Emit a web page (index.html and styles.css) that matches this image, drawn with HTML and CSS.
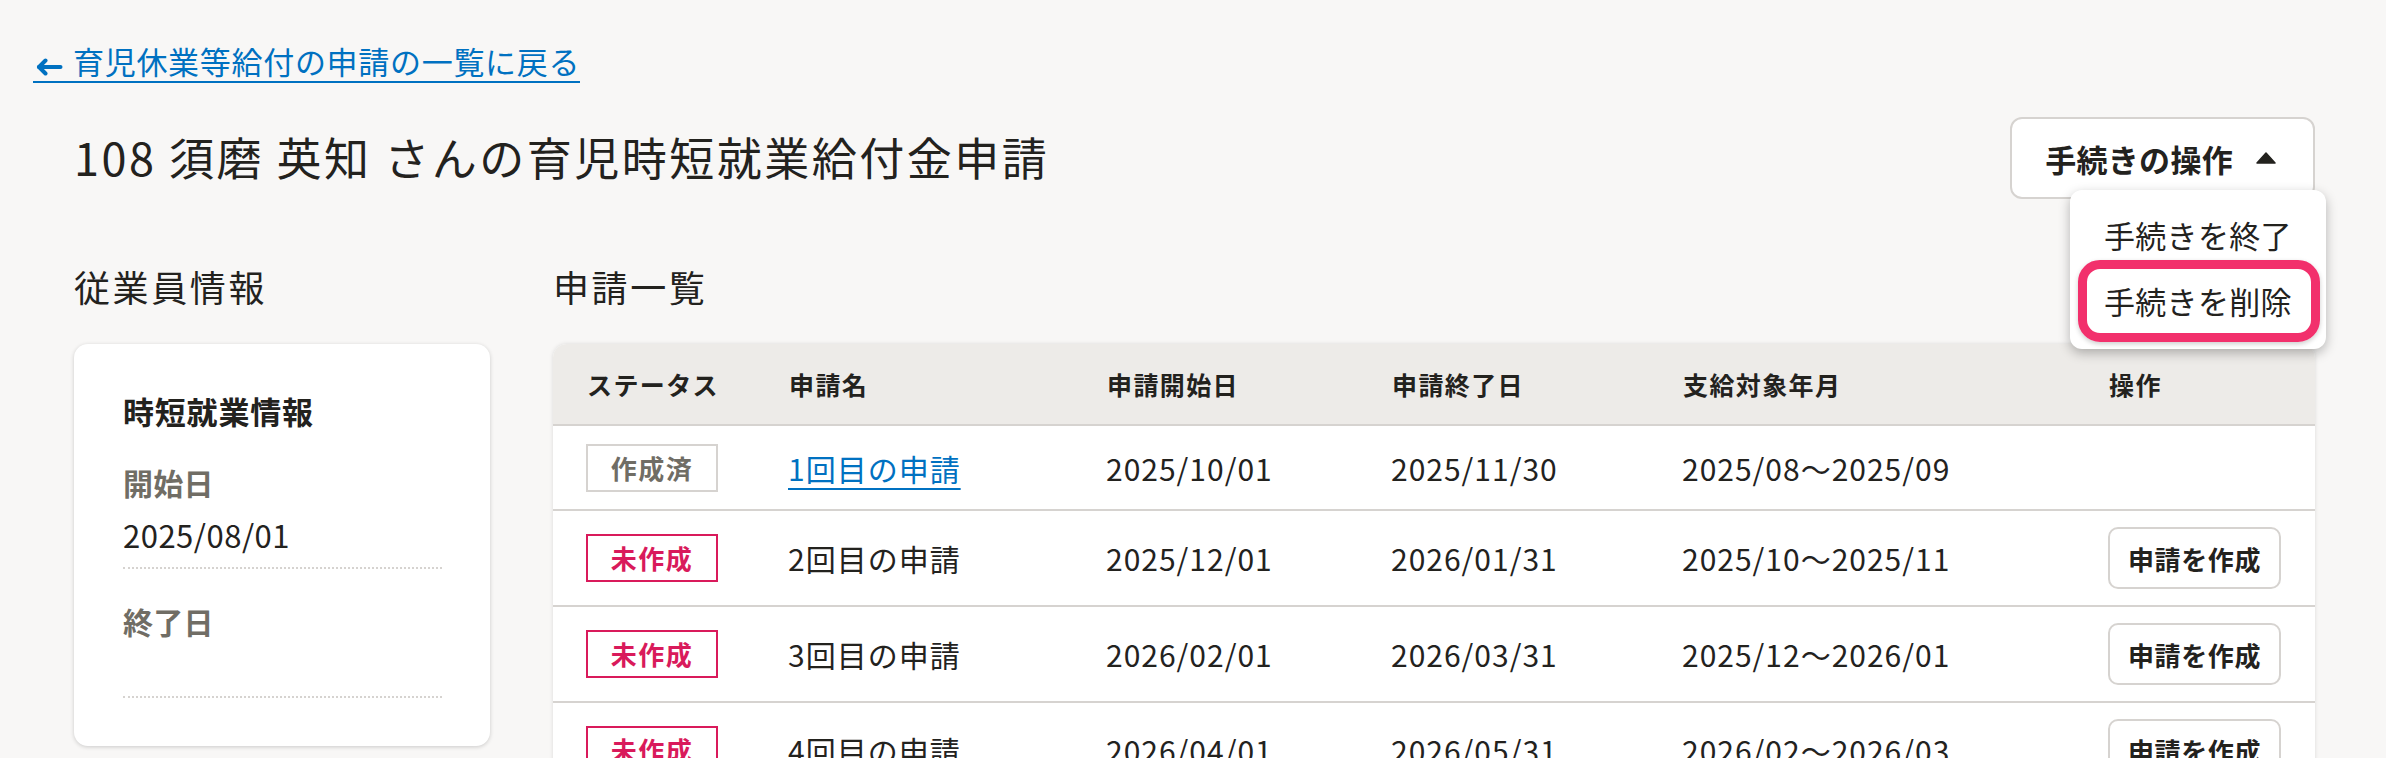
FILE: index.html
```html
<!DOCTYPE html>
<html lang="ja">
<head>
    <meta charset="UTF-8">
    <meta name="viewport" content="width=device-width, initial-scale=1.0">
    <title>育児時短就業給付金申請</title>
    <link rel="stylesheet" href="styles.css">
</head>
<body>
    <div class="page">
        <nav class="back-nav">
            <a class="back-link" href="#">
                <svg width="28" height="18" viewBox="0 0 28 18" fill="none" stroke="currentColor" stroke-width="4" stroke-linecap="round" stroke-linejoin="round">
                    <path d="M25.5 9H4"/>
                    <path d="M10.5 2.5L4 9L10.5 15.5"/>
                </svg>
                <span>育児休業等給付の申請の一覧に戻る</span>
            </a>
        </nav>

        <div class="content">
            <header class="page-header">
                <h1 class="page-title">108 須磨 英知 さんの育児時短就業給付金申請</h1>
                <div class="actions">
                    <button class="actions-toggle" type="button">
                        <span>手続きの操作</span>
                        <svg width="20" height="12" viewBox="0 0 20 12">
                            <path d="M10 1L19 11H1Z" fill="#23221e" stroke="#23221e" stroke-width="1.5" stroke-linejoin="round"/>
                        </svg>
                    </button>
                    <!-- open dropdown -->
                    <ul class="actions-menu">
                        <li class="menu-item">手続きを終了</li>
                        <li class="menu-item is-marked">手続きを削除</li>
                    </ul>
                </div>
            </header>

            <div class="columns">
                <section class="side">
                    <h2 class="section-title">従業員情報</h2>
                    <div class="info-card">
                        <h3 class="info-title">時短就業情報</h3>
                        <dl class="info-list">
                            <dt>開始日</dt>
                            <dd>2025/08/01</dd>
                            <dt>終了日</dt>
                            <dd></dd>
                        </dl>
                    </div>
                </section>

                <section class="main">
                    <h2 class="section-title">申請一覧</h2>
                    <div class="table-card">
                        <table class="apps">
                            <colgroup>
                                <col class="col-status">
                                <col class="col-name">
                                <col class="col-start">
                                <col class="col-end">
                                <col class="col-period">
                                <col>
                            </colgroup>
                            <thead>
                                <tr>
                                    <th>ステータス</th>
                                    <th>申請名</th>
                                    <th>申請開始日</th>
                                    <th>申請終了日</th>
                                    <th>支給対象年月</th>
                                    <th>操作</th>
                                </tr>
                            </thead>
                            <tbody>
                                <tr>
                                    <td><span class="badge badge-done">作成済</span></td>
                                    <td><a class="app-link" href="#">1回目の申請</a></td>
                                    <td>2025/10/01</td>
                                    <td>2025/11/30</td>
                                    <td>2025/08〜2025/09</td>
                                    <td></td>
                                </tr>
                                <tr>
                                    <td><span class="badge badge-todo">未作成</span></td>
                                    <td>2回目の申請</td>
                                    <td>2025/12/01</td>
                                    <td>2026/01/31</td>
                                    <td>2025/10〜2025/11</td>
                                    <td><button class="create-btn" type="button">申請を作成</button></td>
                                </tr>
                                <tr>
                                    <td><span class="badge badge-todo">未作成</span></td>
                                    <td>3回目の申請</td>
                                    <td>2026/02/01</td>
                                    <td>2026/03/31</td>
                                    <td>2025/12〜2026/01</td>
                                    <td><button class="create-btn" type="button">申請を作成</button></td>
                                </tr>
                                <tr>
                                    <td><span class="badge badge-todo">未作成</span></td>
                                    <td>4回目の申請</td>
                                    <td>2026/04/01</td>
                                    <td>2026/05/31</td>
                                    <td>2026/02〜2026/03</td>
                                    <td><button class="create-btn" type="button">申請を作成</button></td>
                                </tr>
                            </tbody>
                        </table>
                    </div>
                </section>
            </div>
        </div>
    </div>
</body>
</html>
```

FILE: styles.css
```css
* {
    box-sizing: border-box;
}

html,
body {
    margin: 0;
    height: 100%;
    overflow: hidden;
}

body {
    background: #f8f7f6;
    color: #23221e;
    font-family: "Noto Sans CJK JP", "Noto Sans", sans-serif;
}

.page {
    padding: 45px 71px 0 33px;
}

/* back link */
.back-nav {
    display: flex;
}

.back-link {
    display: flex;
    align-items: flex-end;
    gap: 10px;
    padding: 0 0 5px 2px;
    border-bottom: 2px solid #0071c1;
    color: #0071c1;
    text-decoration: none;
    font-size: 31px;
    line-height: 1;
    letter-spacing: 0.7px;
}

.back-link svg {
    margin-bottom: 0;
}

.content {
    padding-left: 41px;
}

/* title row */
.page-header {
    display: flex;
    justify-content: space-between;
    align-items: center;
    margin-top: 34px;
}

.page-title {
    margin: 0 0 4px;
    font-size: 45px;
    font-weight: 400;
    line-height: 1;
    letter-spacing: 2.5px;
}

.actions {
    position: relative;
}

.actions-toggle {
    display: flex;
    align-items: center;
    gap: 23px;
    height: 82px;
    padding: 0 37px 0 33px;
    background: #fff;
    border: 2px solid #d6d3d0;
    border-radius: 12px;
    color: #23221e;
    font-family: inherit;
    font-size: 31px;
    font-weight: 700;
    letter-spacing: 0.3px;
}

.actions-menu {
    position: absolute;
    top: 73px;
    right: -11px;
    z-index: 10;
    width: 256px;
    margin: 0;
    padding: 12px 0 15px;
    list-style: none;
    background: #fff;
    border-radius: 12px;
    box-shadow: 0 4px 12px rgba(0, 0, 0, 0.28);
}

.menu-item {
    position: relative;
    padding-left: 34px;
    font-size: 31px;
    line-height: 66px;
    letter-spacing: 0.3px;
}

/* highlight ring around the delete item */
.menu-item.is-marked::after {
    content: '';
    position: absolute;
    left: 8px;
    right: 6px;
    top: -8px;
    bottom: -8px;
    border: 9px solid #f2306c;
    border-radius: 22px;
    box-shadow: 0 2px 5px rgba(0, 0, 0, 0.2);
}

/* two columns */
.columns {
    display: flex;
    gap: 63px;
    margin-top: 69px;
}

.side {
    flex: none;
    width: 416px;
}

.main {
    flex: 1;
    min-width: 0;
}

.section-title {
    margin: 0 0 40px;
    font-size: 36px;
    font-weight: 400;
    line-height: 1;
    letter-spacing: 2.6px;
}

/* employee card */
.info-card {
    padding: 52px 48px 48px 49px;
    background: #fff;
    border-radius: 14px;
    box-shadow: 0 1px 4px rgba(0, 0, 0, 0.18);
}

.info-title {
    margin: 0;
    font-size: 31px;
    font-weight: 700;
    line-height: 30px;
    letter-spacing: 0.8px;
}

.info-list {
    margin: 42px 0 0;
}

.info-list dt {
    color: #706d65;
    font-size: 30px;
    font-weight: 700;
    line-height: 29px;
    letter-spacing: 0.3px;
}

.info-list dd {
    min-height: 40px;
    margin: 22px 0 0;
    padding-bottom: 17px;
    border-bottom: 2px dotted #d6d3d0;
    font-size: 31px;
    line-height: 31px;
    letter-spacing: 0.5px;
}

.info-list dd + dt {
    margin-top: 38px;
}

/* applications table */
.table-card {
    background: #fff;
    border-radius: 14px 14px 0 0;
    overflow: hidden;
    box-shadow: 0 0 4px rgba(0, 0, 0, 0.12);
}

.apps {
    width: 100%;
    border-collapse: separate;
    border-spacing: 0;
    table-layout: fixed;
}

.col-status { width: 202px; }
.col-name { width: 318px; }
.col-start { width: 285px; }
.col-end { width: 291px; }
.col-period { width: 426px; }

.apps th,
.apps td {
    box-sizing: content-box;
    border-bottom: 2px solid #d6d3d0;
    text-align: left;
    vertical-align: middle;
    white-space: nowrap;
}

.apps th {
    height: 80px;
    padding: 0 0 0 34px;
    background: #edebe8;
    font-size: 25px;
    font-weight: 700;
    line-height: 1;
    letter-spacing: 1.4px;
}

.apps td {
    height: 51px;
    padding: 16px 0 16px 33px;
    font-size: 30px;
    line-height: 1;
    letter-spacing: 1px;
}

.badge {
    display: inline-flex;
    align-items: center;
    justify-content: center;
    width: 132px;
    height: 48px;
    border: 2px solid;
    font-size: 26px;
    font-weight: 700;
    letter-spacing: 1.5px;
    vertical-align: middle;
}

.badge-done {
    border-color: #d6d3d0;
    color: #706d65;
}

.badge-todo {
    border-color: #d91a5b;
    color: #d91a5b;
}

.app-link {
    color: #0071c1;
    text-decoration: underline;
    text-decoration-thickness: 2px;
    text-underline-offset: 7px;
}

.create-btn {
    display: inline-flex;
    align-items: center;
    justify-content: center;
    width: 173px;
    height: 62px;
    padding: 0;
    background: #fff;
    border: 2px solid #d6d3d0;
    border-radius: 10px;
    color: #23221e;
    font-family: inherit;
    font-size: 26px;
    font-weight: 700;
    letter-spacing: 0.6px;
    vertical-align: middle;
}
```
